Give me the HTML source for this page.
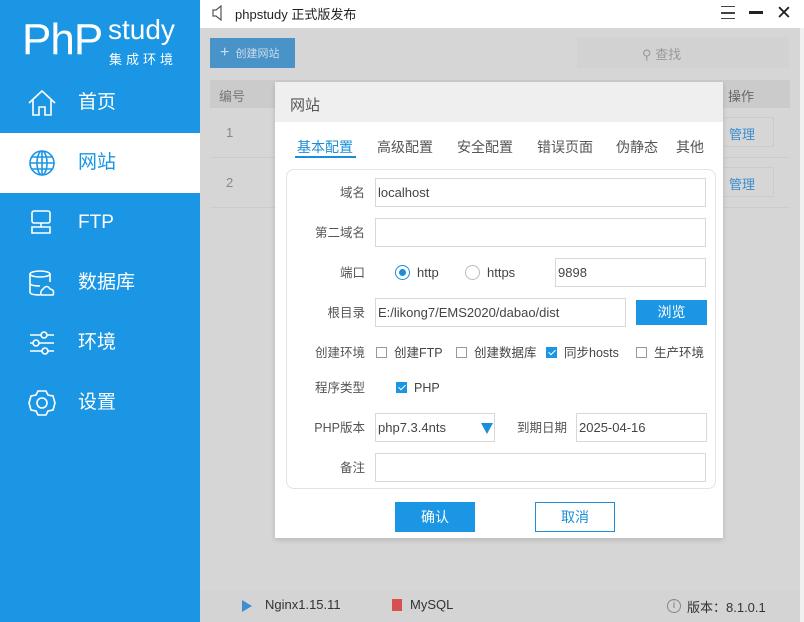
<!DOCTYPE html><html><head><meta charset="utf-8"><style>
*{box-sizing:border-box;margin:0;padding:0}
body{width:804px;height:622px;overflow:hidden;font-family:"Liberation Sans","Noto Sans CJK SC",sans-serif;background:#d6d6d6;position:relative;font-size:13px;color:#333}
.a{position:absolute}
.side{left:0;top:0;width:200px;height:622px;background:#1a96e4;color:#fff}
.nav{position:absolute;left:0;width:200px;height:60px;font-size:19px}
.nav span{position:absolute;left:78px;top:16px;line-height:28px;height:28px}
.nav svg{position:absolute;left:27px;top:15px}
.lbl{position:absolute;font-size:12.5px;color:#555;text-align:right;width:70px;line-height:16px}
.inp{position:absolute;border:1px solid #d8d8d8;background:#fff;font-size:13px;color:#444;padding:6px 0 0 2px;height:29px}
.cb{display:inline-block;width:11px;height:11px;border:1px solid #999;vertical-align:-1px;margin-right:7px;background:#fff}
.cbk{background:#1a96e4;border-color:#1a96e4;position:relative}
.cbk:after{content:"";position:absolute;left:3px;top:0px;width:3px;height:6px;border:solid #fff;border-width:0 1.5px 1.5px 0;transform:rotate(45deg)}
.t{position:absolute;font-size:13px;color:#444;line-height:16px}
</style></head><body>
<div class="a side">
<div class="a" style="left:22px;top:15px;font-size:44px;line-height:50px;letter-spacing:-1px">PhP</div>
<div class="a" style="left:108px;top:14px;font-size:28px">study</div>
<div class="a" style="left:109px;top:49px;font-size:13px;letter-spacing:4px">集成环境</div>
<div class="nav" style="top:73px"><svg width="30" height="30" viewBox="0 0 30 30" fill="none" stroke="#fff" stroke-width="1.6"><path d="M2 15L15 3L28 15M6 12V27H12V19H18V27H24V12"/></svg><span>首页</span></div>
<div class="nav" style="top:133px;background:#fff;color:#1a96e4"><svg width="30" height="30" viewBox="0 0 30 30" fill="none" stroke="#1a96e4" stroke-width="1.6"><circle cx="15" cy="15" r="12"/><ellipse cx="15" cy="15" rx="5" ry="12"/><path d="M3 15H27M5 9H25M5 21H25M15 3V27"/></svg><span>网站</span></div>
<div class="nav" style="top:193px"><svg width="30" height="30" viewBox="0 0 30 30" fill="none" stroke="#fff" stroke-width="1.6"><rect x="5" y="3" width="18" height="12" rx="2"/><path d="M14 15V19M5 19H23V25H5Z"/></svg><span>FTP</span></div>
<div class="nav" style="top:253px"><svg width="30" height="30" viewBox="0 0 30 30" fill="none" stroke="#fff" stroke-width="1.6"><ellipse cx="13" cy="6" rx="10" ry="3"/><path d="M3 6V24Q3 27 13 27M3 15Q3 18 13 18M23 6V14M14 27H26Q28 22 23 21Q20 16 16 21Q13 23 14 27Z"/></svg><span>数据库</span></div>
<div class="nav" style="top:313px"><svg width="30" height="30" viewBox="0 0 30 30" fill="none" stroke="#fff" stroke-width="1.6"><path d="M3 7H14M20 7H27M3 15H6M12 15H27M3 23H15M21 23H27"/><circle cx="17" cy="7" r="3"/><circle cx="9" cy="15" r="3"/><circle cx="18" cy="23" r="3"/></svg><span>环境</span></div>
<div class="nav" style="top:373px"><svg width="30" height="30" viewBox="0 0 30 30" fill="none" stroke="#fff" stroke-width="1.6"><path d="M11 3H19L21 7L26 8L28 15L26 22L21 23L19 27H11L9 23L4 22L2 15L4 8L9 7Z"/><circle cx="15" cy="15" r="5"/></svg><span>设置</span></div>
</div>
<div class="a" style="left:200px;top:0;width:604px;height:28px;background:#fff"></div>
<svg class="a" style="left:211px;top:5px" width="16" height="16" viewBox="0 0 16 16" fill="none" stroke="#555" stroke-width="1.2"><path d="M2 5H5L10 1V15L5 11H2Z"/></svg>
<div class="a" style="left:235px;top:4px;font-size:13px;color:#222">phpstudy 正式版发布</div>
<div class="a" style="left:721px;top:6px;width:14px;height:13px;border-top:1.5px solid #444;border-bottom:1.5px solid #444"></div><div class="a" style="left:721px;top:12px;width:14px;height:1.5px;background:#444"></div>
<div class="a" style="left:749px;top:11px;width:14px;height:2.5px;background:#222"></div>
<div class="a" style="left:776px;top:2px;font-size:19px;color:#222">✕</div>
<div class="a" style="left:800px;top:28px;width:4px;height:594px;background:#f0f0f0"></div>
<div class="a" style="left:210px;top:38px;width:85px;height:30px;background:#4a93c8;color:#cde;font-size:11px;padding:7px 0 0 10px"><span style="font-size:16px;line-height:12px">+</span>&nbsp; 创建网站</div>
<div class="a" style="left:577px;top:37px;width:212px;height:31px;background:#d2d2d2;color:#999;padding:7px 0 0 65px">⚲ 查找</div>
<div class="a" style="left:210px;top:80px;width:580px;height:28px;background:#cbcbcb"></div>
<div class="a" style="left:219px;top:86px;color:#777">编号</div><div class="a" style="left:728px;top:86px;color:#666">操作</div>
<div class="a" style="left:226px;top:125px;color:#888">1</div><div class="a" style="left:226px;top:175px;color:#888">2</div>
<div class="a" style="left:210px;top:157px;width:580px;height:1px;background:#ccc"></div>
<div class="a" style="left:210px;top:207px;width:580px;height:1px;background:#ccc"></div>
<div class="a" style="left:722px;top:117px;width:52px;height:30px;border:1px solid #ccc;color:#3b8ed0;padding:6px 0 0 6px">管理</div>
<div class="a" style="left:722px;top:167px;width:52px;height:30px;border:1px solid #ccc;color:#3b8ed0;padding:6px 0 0 6px">管理</div>
<div class="a" style="left:200px;top:590px;width:600px;height:32px;background:#d4d4d4"></div>
<div class="a" style="left:242px;top:600px;width:0;height:0;border-left:10px solid #3d8fd1;border-top:6px solid transparent;border-bottom:6px solid transparent"></div>
<div class="a" style="left:265px;top:597px;color:#333">Nginx1.15.11</div>
<div class="a" style="left:392px;top:599px;width:10px;height:12px;background:#d65050"></div>
<div class="a" style="left:410px;top:597px;color:#333">MySQL</div>
<div class="a" style="left:667px;top:599px;width:14px;height:14px;border:1px solid #888;border-radius:50%;font-size:10px;color:#777;text-align:center;line-height:12px">i</div>
<div class="a" style="left:687px;top:597px;color:#333">版本：8.1.0.1</div>
<!-- dialog -->
<div class="a" style="left:275px;top:82px;width:448px;height:456px;background:#fff;box-shadow:0 2px 5px rgba(0,0,0,.15)"></div>
<div class="a" style="left:275px;top:82px;width:448px;height:40px;background:#efefef"></div>
<div class="a" style="left:290px;top:94px;font-size:15px;color:#555">网站</div>
<div class="a" style="left:297px;top:137px;font-size:14px;color:#1a8ed8">基本配置</div>
<div class="a" style="left:295px;top:156px;width:61px;height:2px;background:#1a8ed8"></div>
<div class="a" style="left:377px;top:137px;font-size:14px;color:#555">高级配置</div>
<div class="a" style="left:457px;top:137px;font-size:14px;color:#555">安全配置</div>
<div class="a" style="left:537px;top:137px;font-size:14px;color:#555">错误页面</div>
<div class="a" style="left:616px;top:137px;font-size:14px;color:#555">伪静态</div>
<div class="a" style="left:676px;top:137px;font-size:14px;color:#555">其他</div>
<div class="a" style="left:286px;top:169px;width:430px;height:320px;border:1px solid #e3e3e3;border-radius:8px"></div>
<div class="lbl" style="left:295px;top:185px">域名</div><div class="inp" style="left:375px;top:178px;width:331px">localhost</div>
<div class="lbl" style="left:295px;top:225px">第二域名</div><div class="inp" style="left:375px;top:218px;width:331px"></div>
<div class="lbl" style="left:295px;top:265px">端口</div>
<div class="a" style="left:395px;top:265px;width:15px;height:15px;border:1px solid #1a8ed8;border-radius:50%"></div><div class="a" style="left:399px;top:269px;width:7px;height:7px;background:#1a8ed8;border-radius:50%"></div>
<div class="t" style="left:417px;top:265px">http</div>
<div class="a" style="left:465px;top:265px;width:15px;height:15px;border:1px solid #bbb;border-radius:50%"></div>
<div class="t" style="left:487px;top:265px">https</div>
<div class="inp" style="left:555px;top:258px;width:151px">9898</div>
<div class="lbl" style="left:295px;top:305px">根目录</div><div class="inp" style="left:375px;top:298px;width:251px">E:/likong7/EMS2020/dabao/dist</div>
<div class="a" style="left:636px;top:300px;width:71px;height:25px;background:#1a96e4;color:#fff;font-size:14px;text-align:center;line-height:25px">浏览</div>
<div class="lbl" style="left:295px;top:345px">创建环境</div>
<div class="t" style="left:376px;top:345px;font-size:12.5px"><span class="cb"></span>创建FTP</div>
<div class="t" style="left:456px;top:345px;font-size:12.5px"><span class="cb"></span>创建数据库</div>
<div class="t" style="left:546px;top:345px;font-size:12.5px"><span class="cb cbk"></span>同步hosts</div>
<div class="t" style="left:636px;top:345px;font-size:12.5px"><span class="cb"></span>生产环境</div>
<div class="lbl" style="left:295px;top:380px">程序类型</div>
<div class="t" style="left:396px;top:380px;font-size:12.5px"><span class="cb cbk"></span>PHP</div>
<div class="lbl" style="left:295px;top:420px">PHP版本</div>
<div class="inp" style="left:375px;top:413px;width:120px">php7.3.4nts</div>
<div class="a" style="left:481px;top:423px;border-top:11px solid #1a8ed8;border-left:6px solid transparent;border-right:6px solid transparent"></div>
<div class="t" style="left:517px;top:420px;font-size:12.5px;color:#555">到期日期</div>
<div class="inp" style="left:576px;top:413px;width:131px">2025-04-16</div>
<div class="lbl" style="left:295px;top:460px">备注</div><div class="inp" style="left:375px;top:453px;width:331px"></div>
<div class="a" style="left:395px;top:502px;width:80px;height:30px;background:#1a96e4;color:#fff;font-size:14px;text-align:center;line-height:30px">确认</div>
<div class="a" style="left:535px;top:502px;width:80px;height:30px;border:1px solid #1a8ed8;color:#1a8ed8;font-size:14px;text-align:center;line-height:28px">取消</div>
</body></html>
